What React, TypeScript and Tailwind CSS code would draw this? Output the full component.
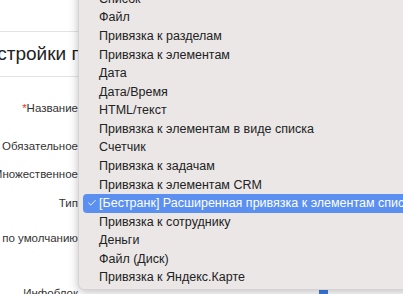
import { Check } from 'lucide-react';

const TYPES = [
  'Список',
  'Файл',
  'Привязка к разделам',
  'Привязка к элементам',
  'Дата',
  'Дата/Время',
  'HTML/текст',
  'Привязка к элементам в виде списка',
  'Счетчик',
  'Привязка к задачам',
  'Привязка к элементам CRM',
  '[Бестранк] Расширенная привязка к элементам списка с автозаполнением',
  'Привязка к сотруднику',
  'Деньги',
  'Файл (Диск)',
  'Привязка к Яндекс.Карте',
];

const SELECTED = 11;

// label rows of the form behind the menu: [text, row height]
const ROWS: [string, number][] = [
  ['Название', 38],
  ['Обязательное', 28],
  ['Множественное', 29],
  ['Тип', 35],
  ['Значение по умолчанию', 55],
  ['Инфоблок', 30],
];

export default function App() {
  return (
    <div className="relative w-[403px] h-[294px] overflow-hidden bg-white text-[#333]" style={{ fontFamily: '"Liberation Sans", Arial, sans-serif' }}>
      {/* Form behind */}
      <div className="flex flex-col">
        <div className="h-[32px] border-b border-[#e3e3e3]" />
        <div className="h-[45px] flex items-center border-b border-[#e3e3e3] whitespace-nowrap">
          <span className="ml-[-27px] text-[19px] text-[#222]">Настройки поля</span>
        </div>
        <div className="flex flex-col pt-[22px]">
          {ROWS.map(([label, h], i) => (
            <div key={label} className="flex items-start" style={{ height: h }}>
              <div className="w-[78px] shrink-0 flex justify-end text-[11.5px] leading-[18px] whitespace-nowrap">
                {i === 0 && <span className="text-[#e32]">*</span>}
                <span>{label}</span>
              </div>
              {i === 5 && <div className="ml-[241px] mt-[4px] w-[9px] h-[9px] rounded-[2px] bg-[#3b7ce0]" />}
            </div>
          ))}
        </div>
      </div>

      {/* Dropdown menu */}
      <div className="absolute left-[78px] top-[-16px] w-[360px] h-[306px] rounded-[6px] bg-[#ebe7e7] border border-[#d6d2d2] shadow-[0_2px_10px_rgba(0,0,0,0.25)] pt-[5px]">
        {TYPES.map((t, i) => (
          <div
            key={t}
            className={`mx-[4px] h-[18.57px] flex items-center rounded-[4px] whitespace-nowrap text-[12.5px] ${i === SELECTED ? 'bg-[#5b8ff0] text-white' : 'text-[#222]'}`}
          >
            <span className="w-[16px] shrink-0 flex justify-center pl-[1px]">
              {i === SELECTED && <Check className="w-[10px] h-[10px]" strokeWidth={2.2} />}
            </span>
            <span>{t}</span>
          </div>
        ))}
      </div>
    </div>
  );
}
